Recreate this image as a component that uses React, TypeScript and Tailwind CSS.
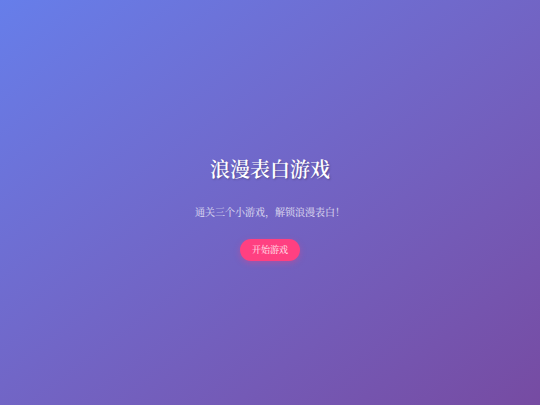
export default function App() {
  return (
    <div className="flex min-h-screen w-full flex-col items-center justify-center bg-gradient-to-br from-[#667eea] to-[#764ba2] pt-3 font-['Noto_Serif_CJK_SC','Liberation_Serif','Noto_Sans_CJK_SC',serif] text-white">
      <h1 className="text-[20px] font-semibold leading-6 [text-shadow:1px_1px_2px_rgba(0,0,0,0.25)]">
        浪漫表白游戏
      </h1>
      <p className="mt-[23px] text-[10px] leading-[15px] text-white/80">
        通关三个小游戏，解锁浪漫表白！
      </p>
      <button className="mt-5 h-[22px] w-[60px] rounded-full bg-[#ff4081] text-[9px] text-white/90 shadow-[0_2px_6px_rgba(255,64,129,0.35)]">
        开始游戏
      </button>
    </div>
  );
}
